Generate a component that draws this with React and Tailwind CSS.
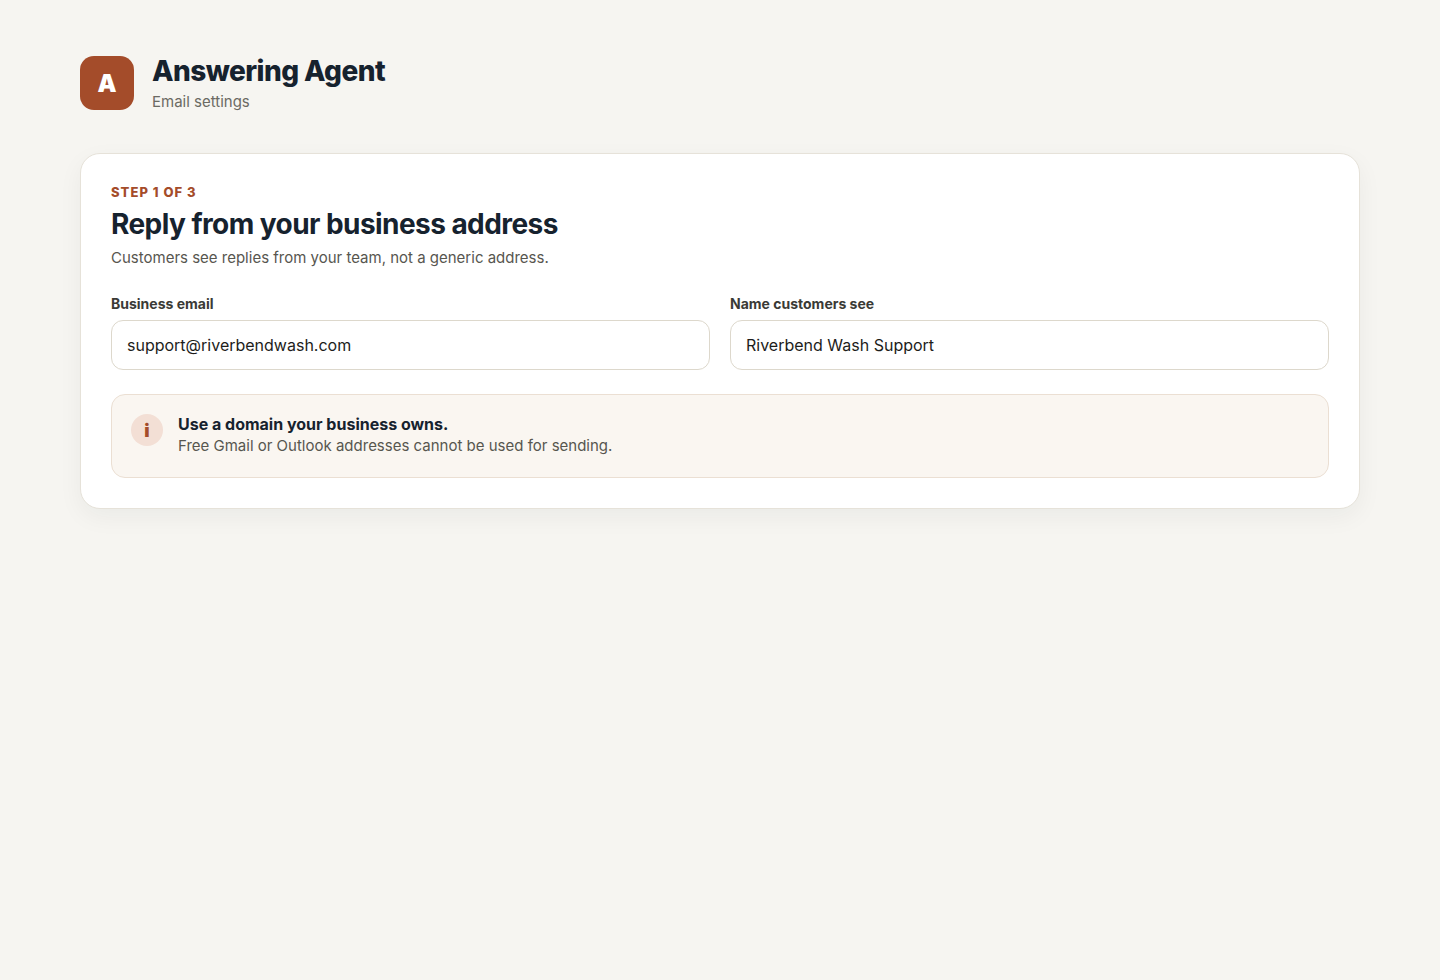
export default function App() {
  return (
    <div className="min-h-[980px] bg-[#f6f5f1] px-20 pt-14 font-['Inter',sans-serif] text-[#16222e]">
      <header className="flex items-start gap-[18px]">
        <div className="flex h-[54px] w-[54px] items-center justify-center rounded-[14px] bg-[#a44c2a] pt-[2px] text-[24px] font-black text-white">A</div>
        <div className="-mt-[1px]">
          <h1 className="text-[28px] leading-[32px] font-extrabold tracking-[-0.56px]">Answering Agent</h1>
          <p className="mt-[5px] text-[15px] leading-[20px] text-[#6b6a63]">Email settings</p>
        </div>
      </header>
      <main className="mt-[41px] rounded-[20px] border border-[#e6e2d9] bg-white p-[30px] shadow-[0_8px_24px_rgba(22,34,46,0.05)]">
        <div className="text-[13px] leading-[16px] font-extrabold tracking-[1.04px] text-[#a44c2a]">STEP 1 OF 3</div>
        <h2 className="mt-[6px] text-[28px] leading-[36px] font-bold tracking-[-0.56px]">Reply from your business address</h2>
        <p className="mt-[6px] text-[15px] leading-[20px] text-[#57564f]">Customers see replies from your team, not a generic address.</p>
        <div className="mt-[28px] grid grid-cols-2 gap-5">
          <label className="block">
            <span className="block text-[14px] leading-[16px] font-bold text-[#3a3a36]">Business email</span>
            <input readOnly value="support@riverbendwash.com" className="mt-2 h-[50px] w-full rounded-[12px] border border-[#ddd8cc] bg-white px-[15px] text-[16px] text-[#1d1d1b] outline-none" />
          </label>
          <label className="block">
            <span className="block text-[14px] leading-[16px] font-bold text-[#3a3a36]">Name customers see</span>
            <input readOnly value="Riverbend Wash Support" className="mt-2 h-[50px] w-full rounded-[12px] border border-[#ddd8cc] bg-white px-[15px] text-[16px] text-[#1d1d1b] outline-none" />
          </label>
        </div>
        <div className="mt-6 flex h-[84px] items-start gap-[15px] rounded-[14px] border border-[#ebdfd3] bg-[#faf6f1] px-[19px] pt-[19px]">
          <div className="flex h-8 w-8 shrink-0 items-center justify-center rounded-full bg-[#f3dfd5] pt-[2px] text-[18px] leading-none font-black text-[#a44c2a]">i</div>
          <div>
            <p className="text-[16px] leading-[20px] font-bold">Use a domain your business owns.</p>
            <p className="mt-[1.5px] text-[15px] leading-[20px] text-[#57564f]">Free Gmail or Outlook addresses cannot be used for sending.</p>
          </div>
        </div>
      </main>
    </div>
  );
}
